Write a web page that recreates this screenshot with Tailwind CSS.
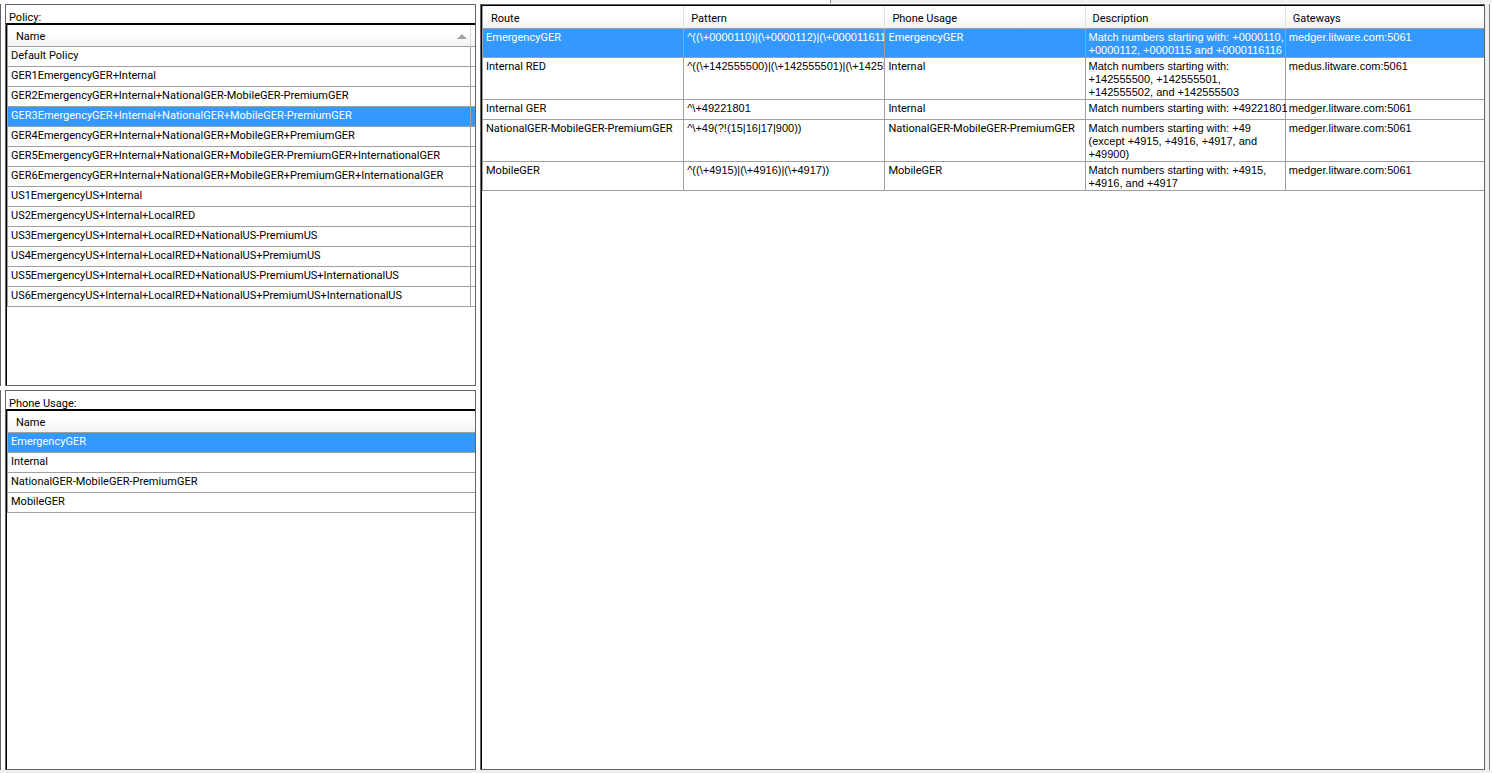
<!DOCTYPE html>
<html lang="en">
<head>
<meta charset="utf-8">
<title>Voice policy routes</title>
<script src="https://cdn.jsdelivr.net/npm/@tailwindcss/browser@4"></script>
</head>
<body class="bg-white text-black text-[11px] leading-[13px] font-[Roboto,'Liberation_Sans',sans-serif]">
<div class="flex h-screen flex-col overflow-hidden">
  <!-- edge of the toolbar above the panes -->
  <div class="flex h-1 shrink-0">
    <div class="w-[830px]"></div>
    <div class="mb-px flex-1 border-l border-[#808080] bg-[#f0f0f0]"></div>
  </div>

  <main class="flex min-h-0 flex-1">
    <!-- edge of the pane to the left -->
    <div class="grid w-[5px] shrink-0 grid-rows-[382px_1fr] gap-1">
      <div class="w-px bg-[#646464]"></div>
      <div class="w-px bg-[#646464]"></div>
    </div>

    <div class="grid w-[471px] shrink-0 grid-rows-[382px_1fr] gap-1">
      <section class="flex flex-col border border-[#646464]">
        <h2 id="policy-label" class="h-[18px] pt-[6px] pl-[3px]">Policy:</h2>
        <div class="flex-1 border-t-2 border-l border-black">
          <table aria-labelledby="policy-label" class="w-full table-fixed border-separate border-spacing-0 border-l border-[#a0a0a0]">
            <colgroup><col><col class="w-[4px]"></colgroup>
            <thead>
              <tr class="h-[22px] bg-linear-to-b from-white from-40% to-[#f1f2f4]">
                <th class="border-r border-b border-r-[#d9dce0] border-b-[#a0a0a0] p-0 pt-px font-normal" aria-sort="ascending">
                  <button class="flex w-full items-center justify-between pr-[3px] pl-2 text-left">Name
                    <svg class="h-[5px] w-[10px]" viewBox="0 0 10 5"><path d="M0 5 5 0l5 5z" fill="#a3a3a3"/></svg>
                  </button>
                </th>
                <td class="border-b border-[#a0a0a0] p-0"></td>
              </tr>
            </thead>
            <tbody id="policies"></tbody>
          </table>
        </div>
      </section>

      <section class="flex flex-col border border-[#646464]">
        <h2 id="usage-label" class="h-[18px] pt-[6px] pl-[3px]">Phone Usage:</h2>
        <div class="flex-1 border-t-2 border-l border-black">
          <table aria-labelledby="usage-label" class="w-full table-fixed border-separate border-spacing-0 border-l border-[#a0a0a0]">
            <thead>
              <tr class="h-[22px] bg-linear-to-b from-white from-40% to-[#f1f2f4]">
                <th class="border-b border-[#a0a0a0] p-0 pt-px pl-2 text-left font-normal">Name</th>
              </tr>
            </thead>
            <tbody>
              <tr class="h-5 bg-[#3399ff] align-top text-white"><td class="border-b border-[#a0a0a0] pt-[2px] pr-0 pb-0 pl-[3px]">EmergencyGER</td></tr>
              <tr class="h-5 align-top"><td class="border-b border-[#a0a0a0] pt-[2px] pr-0 pb-0 pl-[3px]">Internal</td></tr>
              <tr class="h-5 align-top"><td class="border-b border-[#a0a0a0] pt-[2px] pr-0 pb-0 pl-[3px]">NationalGER-MobileGER-PremiumGER</td></tr>
              <tr class="h-5 align-top"><td class="border-b border-[#a0a0a0] pt-[2px] pr-0 pb-0 pl-[3px]">MobileGER</td></tr>
            </tbody>
          </table>
        </div>
      </section>
    </div>

    <section class="ml-1 min-w-0 flex-1 border border-[#646464]">
      <div class="h-full border-t border-l border-black">
        <table aria-label="Routes" class="w-full table-fixed border-separate border-spacing-0 border-l border-[#a0a0a0]">
          <colgroup><col class="w-[20.1%]"><col class="w-[20.1%]"><col class="w-[20%]"><col class="w-[20%]"><col></colgroup>
          <thead>
            <tr class="h-[23px] bg-linear-to-b from-white from-40% to-[#f1f2f4] text-left">
              <th class="border-r border-b border-r-[#e0e3e6] border-b-[#a0a0a0] p-0 pt-[2px] pl-2 font-normal">Route</th>
              <th class="border-r border-b border-r-[#e0e3e6] border-b-[#a0a0a0] p-0 pt-[2px] pl-[7px] font-normal">Pattern</th>
              <th class="border-r border-b border-r-[#e0e3e6] border-b-[#a0a0a0] p-0 pt-[2px] pl-[7px] font-normal">Phone Usage</th>
              <th class="border-r border-b border-r-[#e0e3e6] border-b-[#a0a0a0] p-0 pt-[2px] pl-[7px] font-normal">Description</th>
              <th class="border-b border-[#a0a0a0] p-0 pt-[2px] pl-[7px] font-normal">Gateways</th>
            </tr>
          </thead>
          <tbody id="routes"></tbody>
        </table>
      </div>
    </section>

    <div class="w-[5px] shrink-0 border-r border-[#808080] bg-[#f0f0f0]"></div>
    <div class="w-[2px] shrink-0"></div>
  </main>
  <div class="h-[3px] shrink-0 bg-[#f0f0f0]"></div>
</div>

<script>
  const policies = [
    'Default Policy',
    'GER1EmergencyGER+Internal',
    'GER2EmergencyGER+Internal+NationalGER-MobileGER-PremiumGER',
    'GER3EmergencyGER+Internal+NationalGER+MobileGER-PremiumGER',
    'GER4EmergencyGER+Internal+NationalGER+MobileGER+PremiumGER',
    'GER5EmergencyGER+Internal+NationalGER+MobileGER-PremiumGER+InternationalGER',
    'GER6EmergencyGER+Internal+NationalGER+MobileGER+PremiumGER+InternationalGER',
    'US1EmergencyUS+Internal',
    'US2EmergencyUS+Internal+LocalRED',
    'US3EmergencyUS+Internal+LocalRED+NationalUS-PremiumUS',
    'US4EmergencyUS+Internal+LocalRED+NationalUS+PremiumUS',
    'US5EmergencyUS+Internal+LocalRED+NationalUS-PremiumUS+InternationalUS',
    'US6EmergencyUS+Internal+LocalRED+NationalUS+PremiumUS+InternationalUS'
  ];
  const routes = [
    ['EmergencyGER', '^((\\+0000110)|(\\+0000112)|(\\+000011611', 'EmergencyGER', 'Match numbers starting with: +0000110,<br>+0000112, +0000115 and +0000116116', 'medger.litware.com:5061'],
    ['Internal RED', '^((\\+142555500)|(\\+142555501)|(\\+14255', 'Internal', 'Match numbers starting with:<br>+142555500, +142555501,<br>+142555502, and +142555503', 'medus.litware.com:5061'],
    ['Internal GER', '^\\+49221801', 'Internal', 'Match numbers starting with: +49221801', 'medger.litware.com:5061'],
    ['NationalGER-MobileGER-PremiumGER', '^\\+49(?!(15|16|17|900))', 'NationalGER-MobileGER-PremiumGER', 'Match numbers starting with: +49<br>(except +4915, +4916, +4917, and<br>+49900)', 'medger.litware.com:5061'],
    ['MobileGER', '^((\\+4915)|(\\+4916)|(\\+4917))', 'MobileGER', 'Match numbers starting with: +4915,<br>+4916, and +4917', 'medger.litware.com:5061']
  ];
  const cell = 'border-b border-[#a0a0a0] pt-[2px] pr-0 pb-0 pl-[3px] whitespace-nowrap';
  const columns = [
    'overflow-hidden border-r',
    "overflow-hidden border-r font-['Liberation_Sans',Arial,sans-serif]",
    'overflow-hidden border-r',
    "border-r font-['Liberation_Sans',Arial,sans-serif]",
    "overflow-hidden font-['Liberation_Sans',Arial,sans-serif]"
  ];
  document.getElementById('policies').innerHTML = policies.map((name, i) =>
    `<tr class="${i === 3 ? 'h-5 bg-[#3399ff] align-top text-white' : 'h-5 align-top'}">
      <td class="overflow-hidden border-r ${cell}">${name}</td>
      <td class="border-b border-[#a0a0a0] p-0"></td></tr>`).join('');
  document.getElementById('routes').innerHTML = routes.map((cells, i) =>
    `<tr class="${i === 0 ? 'h-5 bg-[#3399ff] align-top text-white' : 'h-5 align-top'}">${cells.map((c, n) =>
      `<td class="${columns[n]} ${cell}">${c}</td>`).join('')}</tr>`).join('');
</script>
</body>
</html>
